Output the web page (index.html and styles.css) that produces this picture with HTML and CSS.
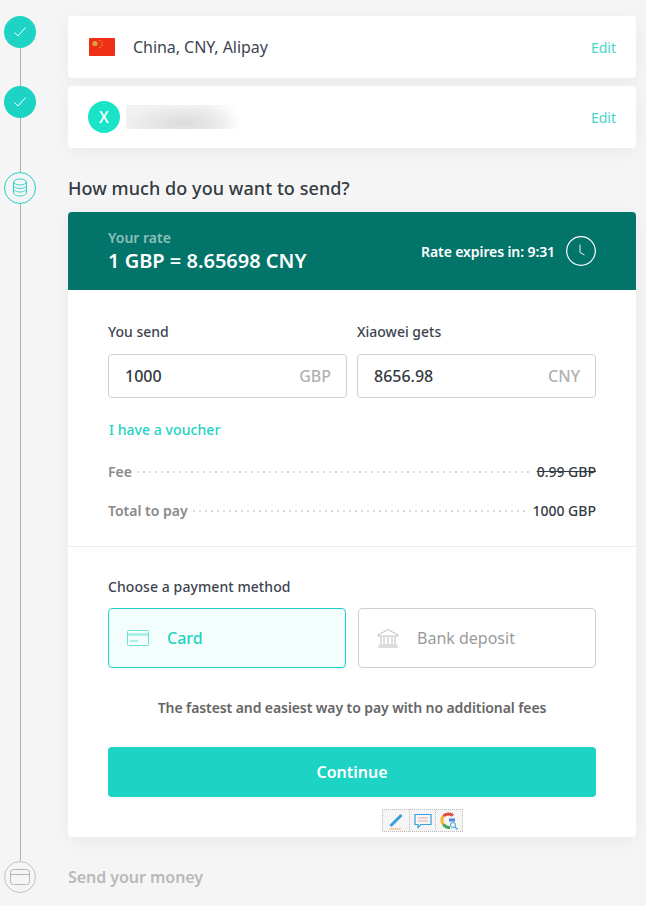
FILE: index.html
```html
<!DOCTYPE html>
<html>
<head>
  <meta charset="UTF-8">
  <link rel="stylesheet" href="styles.css">
</head>
<body>
  <div class="page">
    <div class="rail-line"></div>

    <!-- step 1: destination -->
    <div class="step step-summary">
      <div class="step-icon done">
        <svg width="14" height="12" viewBox="0 0 14 12"><path d="M1.500 6.500 5 10 12.500 1.500" fill="none" stroke="#fff" stroke-width="1"/></svg>
      </div>
      <div class="card summary-card">
        <svg class="flag" width="28" height="20" viewBox="0 0 28 20">
          <rect x="1" y="1" width="26" height="18" rx="1" fill="#ee2f16"/>
          <circle cx="7" cy="6.500" r="2.600" fill="#d9a040"/>
          <circle cx="12" cy="3.500" r=".8" fill="#d9a040"/>
          <circle cx="14" cy="6" r=".8" fill="#d9a040"/>
          <circle cx="14" cy="8.500" r=".8" fill="#d9a040"/>
          <circle cx="12" cy="10.500" r=".8" fill="#d9a040"/>
        </svg>
        <span class="summary-text">China, CNY, Alipay</span>
        <a class="edit">Edit</a>
      </div>
    </div>

    <!-- step 2: recipient -->
    <div class="step step-summary">
      <div class="step-icon done">
        <svg width="14" height="12" viewBox="0 0 14 12"><path d="M1.500 6.500 5 10 12.500 1.500" fill="none" stroke="#fff" stroke-width="1"/></svg>
      </div>
      <div class="card summary-card">
        <span class="avatar">X</span>
        <span class="blurred-name"></span>
        <a class="edit">Edit</a>
      </div>
    </div>

    <!-- step 3: amount -->
    <div class="step step-title">
      <div class="step-icon active">
        <svg width="16" height="20" viewBox="0 0 16 20" fill="none" stroke="#1dd3c4" stroke-width=".9">
          <ellipse cx="8" cy="4" rx="6.500" ry="3"/>
          <path d="M1.500 4v3.500c0 1.600 3 3 6.500 3s6.500-1.400 6.500-3V4"/>
          <path d="M1.500 7.500V11c0 1.600 3 3 6.500 3s6.500-1.400 6.500-3V7.500"/>
          <path d="M1.500 11v4c0 1.600 3 3 6.500 3s6.500-1.400 6.500-3v-4"/>
        </svg>
      </div>
      <h2>How much do you want to send?</h2>
    </div>

    <div class="quote">
      <div class="rate-bar">
        <div class="rate-info">
          <div class="rate-label">Your rate</div>
          <div class="rate-value">1 GBP = 8.65698 CNY</div>
        </div>
        <div class="rate-timer">
          <span>Rate expires in: 9:31</span>
          <svg width="30" height="30" viewBox="0 0 30 30" fill="none" stroke="#fff">
            <circle cx="15" cy="15" r="14.300" stroke-width="1.200"/>
            <path d="M14 8.500v8l4.500 2.500" stroke-width=".9"/>
          </svg>
        </div>
      </div>

      <div class="amounts">
        <div class="fields">
          <div class="field">
            <label>You send</label>
            <div class="input-box"><span class="amount">1000</span><span class="currency">GBP</span></div>
          </div>
          <div class="field">
            <label>Xiaowei gets</label>
            <div class="input-box"><span class="amount">8656.98</span><span class="currency">CNY</span></div>
          </div>
        </div>
        <a class="voucher">I have a voucher</a>
        <div class="cost-row fee">
          <span class="cost-label">Fee</span>
          <span class="dots"></span>
          <s class="cost-value">0.99 GBP</s>
        </div>
        <div class="cost-row total">
          <span class="cost-label">Total to pay</span>
          <span class="dots"></span>
          <span class="cost-value">1000 GBP</span>
        </div>
      </div>

      <div class="payment">
        <div class="payment-title">Choose a payment method</div>
        <div class="methods">
          <div class="method selected">
            <svg width="22" height="16" viewBox="0 0 22 16" fill="none" stroke="#5fdfd3" stroke-width=".9">
              <rect x=".5" y=".5" width="21" height="15" rx="1"/>
              <path d="M.5 5h21M3 11h8"/>
              <path d="M.5 3.500h21" stroke-dasharray="1 1"/>
            </svg>
            <span>Card</span>
          </div>
          <div class="method">
            <svg width="22" height="20" viewBox="0 0 22 20" fill="none" stroke="#b4b4b4" stroke-width=".9">
              <path d="M1 7 11 1.500 21 7v1H1z"/>
              <path d="M4 9v7M7 9v7M11 9v7M15 9v7M18 9v7"/>
              <path d="M2 17h18M1 19h20"/>
            </svg>
            <span>Bank deposit</span>
          </div>
        </div>
        <p class="method-note">The fastest and easiest way to pay with no additional fees</p>
        <button class="continue">Continue</button>
      </div>

      <!-- browser extension toolbar over the card -->
      <div class="ext-bar">
        <div class="ext-btn">
          <svg width="18" height="18" viewBox="0 0 18 18"><path d="M3.500 14 14.500 3" stroke="#3a9fe0" stroke-width="3"/><path d="M2 17h12" stroke="#f0c9a0" stroke-width="1.500"/></svg>
        </div>
        <div class="ext-btn">
          <svg width="18" height="18" viewBox="0 0 18 18" fill="none"><path d="M1 2.500h16v10H7l-3 3v-3H1z" stroke="#3a9fe0" stroke-width="1.200"/><path d="M4 6h10M4 9h10" stroke="#eaa9a0"/></svg>
        </div>
        <div class="ext-btn">
          <svg width="20" height="20" viewBox="0 0 20 20" fill="none" stroke-width="3">
            <path d="M14 4.500A7 7 0 0 0 4.500 5" stroke="#e5493a"/>
            <path d="M4.500 5a7 7 0 0 0 0 8.500" stroke="#f2b632"/>
            <path d="M4.500 13.500A7 7 0 0 0 11 16.500" stroke="#3ea556"/>
            <path d="M10 9h6" stroke="#4a86e8"/>
            <circle cx="14" cy="14" r="2.500" stroke="#3a9fe0" stroke-width="1"/>
            <path d="M16 16l2.500 2.500" stroke="#3a9fe0" stroke-width="1.200"/>
          </svg>
        </div>
      </div>
    </div>

    <!-- step 4: pay -->
    <div class="step step-title last">
      <div class="step-icon pending">
        <svg width="20" height="16" viewBox="0 0 20 16" fill="none" stroke="#b5b5b5">
          <rect x=".5" y=".5" width="19" height="15" rx="3"/>
          <path d="M.5 5.500h19"/>
        </svg>
      </div>
      <h2 class="muted">Send your money</h2>
    </div>
  </div>
</body>
</html>
```

FILE: styles.css
```css
* {
  margin: 0;
  padding: 0;
  box-sizing: border-box;
}

:root {
  --teal: #1dd3c4;
  --dark-teal: #03746a;
  --text: #3d4450;
  --gray: #8a8a8a;
  --border: #d0d0d0;
}

html, body {
  height: 906px;
  overflow: hidden;
}

body {
  background: #f5f5f5;
  font-family: "Noto Sans", "Open Sans", sans-serif;
  color: var(--text);
}

.page {
  position: relative;
  padding: 16px 10px 0 4px;
}

/* line behind the step icons */
.rail-line {
  position: absolute;
  left: 20px;
  top: 32px;
  width: 1px;
  height: 840px;
  background: #b0b0b0;
}

/* steps */
.step {
  position: relative;
  display: flex;
  gap: 32px;
}

.step-summary {
  margin-bottom: 8px;
}

.step-title {
  align-items: center;
  margin-top: 24px;
  height: 32px;
  margin-bottom: 8px;
}

.step-title.last {
  margin-top: 24px;
  margin-bottom: 0;
}

.step-icon {
  flex: none;
  width: 32px;
  height: 32px;
  border-radius: 50%;
  display: flex;
  align-items: center;
  justify-content: center;
  background: #f5f5f5;
}

.step-icon.done {
  background: var(--teal);
}

.step-icon.active {
  border: 1px solid var(--teal);
}

.step-icon.pending {
  border: 1px solid #c4c4c4;
}

h2 {
  font-size: 18px;
  font-weight: 500;
  letter-spacing: 0.07px;
  color: #333a42;
}

h2.muted {
  font-size: 16px;
  font-weight: 600;
  letter-spacing: -0.05px;
  color: #b9b9b9;
}

/* summary cards */
.card {
  flex: 1;
  background: #fff;
  border-radius: 4px;
  box-shadow: 0 4px 20px rgba(0, 0, 0, 0.05);
}

.summary-card {
  height: 62px;
  display: flex;
  align-items: center;
  padding: 0 20px;
}

.flag {
  margin-right: 17px;
}

.summary-text {
  font-size: 16px;
  letter-spacing: -0.05px;
}

.avatar {
  width: 32px;
  height: 32px;
  border-radius: 50%;
  background: #1be3c8;
  color: #fff;
  font-size: 16px;
  font-weight: 500;
  display: flex;
  align-items: center;
  justify-content: center;
}

.blurred-name {
  width: 114px;
  height: 24px;
  margin-left: 6px;
  background: radial-gradient(ellipse 60px 18px at 50% 75%, #dcdcdc 0%, rgba(220, 220, 220, 0) 100%),
    linear-gradient(90deg, #f1f1f1 0%, #f1f1f1 70%, #ffffff 100%);
}

.edit {
  margin-left: auto;
  font-size: 14px;
  color: #45d6c9;
}

/* quote card */
.quote {
  position: relative;
  margin-left: 64px;
  background: #fff;
  border-radius: 4px;
  box-shadow: 0 4px 20px rgba(0, 0, 0, 0.05);
}

.rate-bar {
  height: 78px;
  background: var(--dark-teal);
  border-radius: 4px 4px 0 0;
  padding: 0 40px;
  display: flex;
  align-items: center;
  justify-content: space-between;
  color: #fff;
}

.rate-label {
  font-size: 14px;
  font-weight: 600;
  line-height: 20px;
  color: #8cc0b8;
}

.rate-value {
  font-size: 20px;
  font-weight: 600;
  line-height: 26px;
}

.rate-timer {
  display: flex;
  align-items: center;
  gap: 11px;
  font-size: 14px;
  font-weight: 600;
  letter-spacing: -0.1px;
}

.amounts {
  padding: 32px 40px 0;
  height: 257px;
  border-bottom: 1px solid #eeeeee;
}

.fields {
  display: flex;
  gap: 10px;
}

.field {
  flex: 1;
}

.field label {
  display: block;
  font-size: 14px;
  font-weight: 500;
  line-height: 20px;
  margin-bottom: 12px;
}

.input-box {
  height: 44px;
  border: 1px solid var(--border);
  border-radius: 4px;
  padding: 0 15px 0 16px;
  display: flex;
  align-items: center;
  justify-content: space-between;
}

.amount {
  font-size: 16px;
  font-weight: 500;
  color: #333a42;
}

.currency {
  font-size: 16px;
  font-weight: 500;
  color: #b0b0b0;
}

.voucher {
  display: block;
  margin: 22px 0 0 1px;
  font-size: 14px;
  font-weight: 500;
  letter-spacing: 0.06px;
  line-height: 20px;
  color: var(--teal);
}

.cost-row {
  display: flex;
  align-items: center;
  gap: 4px;
  font-size: 14px;
  line-height: 20px;
}

.cost-row.fee {
  margin-top: 22px;
}

.cost-row.total {
  margin-top: 19px;
}

.cost-label {
  font-weight: 600;
  color: var(--gray);
}

.dots {
  flex: 1;
  height: 2px;
  background-image: radial-gradient(circle, #d8d8d8 1px, transparent 1px);
  background-size: 6px 2px;
  background-position: -1px 0;
}

.total .dots {
  margin-right: 2px;
}

.cost-value {
  color: #333a42;
  font-weight: 500;
}

/* payment */
.payment {
  padding: 30px 40px 40px;
}

.payment-title {
  font-size: 14px;
  font-weight: 500;
  letter-spacing: 0.08px;
  line-height: 20px;
  margin-bottom: 11px;
}

.methods {
  display: flex;
  gap: 12px;
}

.method {
  flex: 1;
  height: 60px;
  border: 1px solid var(--border);
  border-radius: 4px;
  padding: 0 18px;
  display: flex;
  align-items: center;
  gap: 18px;
  font-size: 16px;
  color: #9a9a9a;
}

.method.selected {
  border-color: var(--teal);
  background: #f3fdfb;
  color: var(--teal);
  font-weight: 500;
}

.method-note {
  margin-top: 30px;
  text-align: center;
  font-size: 14px;
  font-weight: 600;
  letter-spacing: -0.09px;
  line-height: 20px;
  color: #666666;
}

.continue {
  display: block;
  width: 100%;
  height: 50px;
  margin-top: 29px;
  border: none;
  border-radius: 4px;
  background: var(--teal);
  color: #fff;
  font-family: inherit;
  font-size: 16px;
  font-weight: 600;
}

/* extension buttons, sits on top of the card */
.ext-bar {
  position: absolute;
  left: 314px;
  bottom: 5px;
  width: 81px;
  height: 23px;
  display: flex;
  background: #f5f5f5;
  border: 1px dotted #bbbbbb;
}

.ext-btn {
  flex: 1;
  display: flex;
  align-items: center;
  justify-content: center;
  border-right: 1px dotted #bbbbbb;
}

.ext-btn:last-child {
  border-right: none;
}
```
